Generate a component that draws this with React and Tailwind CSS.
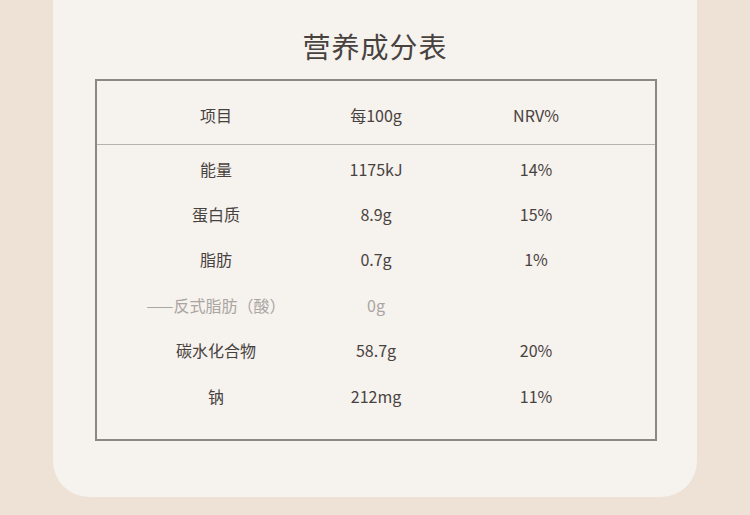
import React from "react";

const rows = [
  { name: "能量", amount: "1175kJ", nrv: "14%" },
  { name: "蛋白质", amount: "8.9g", nrv: "15%" },
  { name: "脂肪", amount: "0.7g", nrv: "1%" },
  { name: "——反式脂肪（酸）", amount: "0g", nrv: "", muted: true },
  { name: "碳水化合物", amount: "58.7g", nrv: "20%" },
  { name: "钠", amount: "212mg", nrv: "11%" },
];

function App() {
  return (
    <div
      className="w-[750px] h-[515px] bg-[#ede2d5] overflow-hidden"
      style={{ fontFamily: '"Noto Sans CJK SC", "Noto Sans", sans-serif' }}
    >
      <div className="mx-[53px] w-[644px] h-[497px] bg-[#f6f2ee] rounded-b-[36px] pt-[29px]">
        <h1 className="text-center text-[28px] leading-[34px] text-[#48423f] font-normal tracking-[1px]">
          营养成分表
        </h1>
        <div className="mt-[16px] ml-[42px] w-[562px] border-2 border-[#8c8784]">
          {/* header */}
          <div className="flex px-[39px] pt-[23px] pb-[18px] text-[16px] leading-[22px] text-[#48423f] border-b border-[#b7b2ae]">
            <div className="w-[160px] text-center">项目</div>
            <div className="w-[160px] text-center">每100g</div>
            <div className="w-[160px] text-center">NRV%</div>
          </div>
          <div className="px-[39px] pt-[1px] pb-[21px]">
            {rows.map((r, i) => (
              <div
                key={i}
                className={
                  "flex items-center h-[45.4px] text-[16px] " +
                  (r.muted ? "text-[#aaa5a1]" : "text-[#48423f]")
                }
              >
                <div className="w-[160px] text-center whitespace-nowrap">{r.name}</div>
                <div className="w-[160px] text-center">{r.amount}</div>
                <div className="w-[160px] text-center">{r.nrv}</div>
              </div>
            ))}
          </div>
        </div>
      </div>
    </div>
  );
}

export default App;
